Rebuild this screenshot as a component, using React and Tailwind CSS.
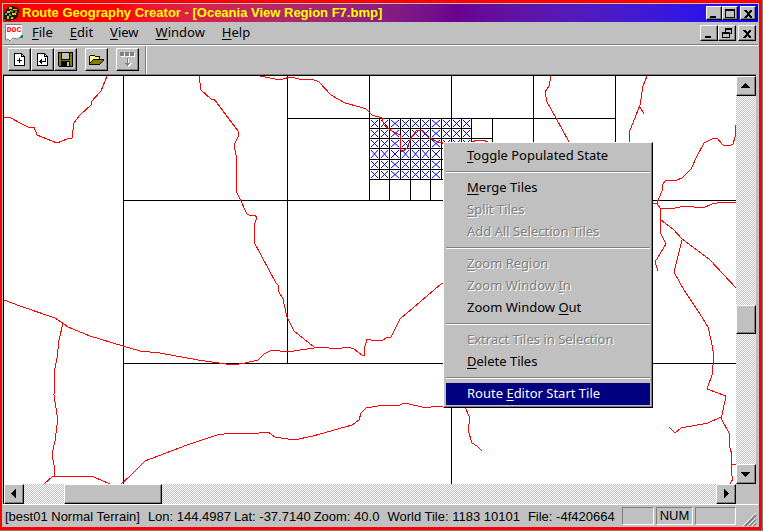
import React from 'react';

const RAISED =
  'bg-[#c0c0c0] border border-t-white border-l-white border-b-black border-r-black shadow-[inset_-1px_-1px_0_#808080]';
const TRACK =
  'bg-[repeating-conic-gradient(#c0c0c0_0_25%,#ffffff_0_50%)] bg-[length:2px_2px]';

const ROADS = [
  '4,118 9,117 22,124 28,127 34,127 37,135 57,143 67,139 72,138 74,123 80,115 92,104 91,102 101,91 107,76',
  '199,76 201,90 211,99 214,99 238,131 238,137 234,145 236,155 236,191 240,199 247,214 251,216 255,215 257,218 254,225 254,242 276,283 278,285 278,290 283,299 287,317 294,331 314,347',
  '4,300 20,306 55,318 64,324 68,327 90,336 123,346 140,351 160,353 198,360 233,365 245,363 258,360 264,354 272,350 287,352 314,348 320,347 337,349 348,347 354,349 362,355 364,355 364,350 367,339 371,340 382,341 386,338 391,337 400,319 441,284 447,281',
  '63,323 59,340 57,358 55,368 54,395 57,415 57,425 55,441 52,454 54,465 54,477',
  '44,484 52,477 68,476 94,477 110,484',
  '121,484 130,476 145,461 187,445 205,439 217,435 231,433 250,434 268,432 275,437 294,440 313,436 352,425 359,420 361,413 366,408 378,406 400,405 404,403 418,406 426,408 437,406 465,407 470,418 468,430 472,443 477,446 482,451',
  '260,76 275,79 283,79 290,77 304,80 312,79 319,82 331,95 345,103 360,107 366,109 372,115 382,118 384,125 392,131 400,135 400,148 402,152 407,148 411,138 416,131 421,130 429,138 438,142 447,144',
  '472,142 477,140 483,140 488,142',
  '551,76 549,86 545,92 547,102 556,118 569,142',
  '647,76 643,86 640,105 629,133 629,142',
  '640,107 644,114',
  '736,125 735,137 733,144 729,146 723,145 717,138 714,138 704,143 697,156 691,169 682,178 677,180 665,181 663,184 662,191 657,203 660,208 660,218 661,220 673,229 682,239 697,250 710,260 736,288',
  '650,203 657,203',
  '661,209 675,208 685,206 703,208 712,204 722,202 736,203',
  '660,219 660,232 666,244 655,262 658,271',
  '682,240 674,272 684,290 700,314 708,327 711,340 714,356 712,375 707,389 726,396 722,415 721,418 729,433 730,448 732,455 731,472 733,479 730,484',
  '721,417 708,423 681,428 675,433 669,427',
  '731,464 736,465',
];

const GRID =
  'M123.5 76V2000M123 200.5H3000M123 363.5H3000M287.5 76V363M369.5 76V200M451.5 76V2000M533.5 76V200M615.5 76V200M287 118.5H616M492.5 118V200M369 138.5H492M389.5 179V200M410.5 179V200M430.5 179V200';

const XS = [369, 379, 389, 400, 410, 420, 430, 441, 451, 461, 471];
const YS = [118, 128, 138, 148, 159, 169, 179];

function Tiles() {
  const cells = [];
  for (let r = 0; r < 6; r++) {
    for (let c = 0; c < 10; c++) {
      const x = XS[c], y = YS[r], x2 = XS[c + 1], y2 = YS[r + 1];
      cells.push(
        <g key={`${r}-${c}`}>
          <rect x={x + 0.5} y={y + 0.5} width={x2 - x} height={y2 - y} stroke="#000" />
          <path
            d={`M${x + 2} ${y + 2}L${x2 - 1} ${y2 - 1}M${x2 - 1} ${y + 2}L${x + 2} ${y2 - 1}`}
            stroke="#0000ff"
            shapeRendering="auto"
          />
        </g>
      );
    }
  }
  return <g fill="none">{cells}</g>;
}

function RouteMap() {
  return (
    <svg className="block h-full w-full" role="img" aria-label="Route map" shapeRendering="crispEdges">
      <g transform="translate(-4 -76)">
        <path d={GRID} stroke="#000" fill="none" />
        <Tiles />
        {ROADS.map((p) => (
          <polyline key={p} points={p} stroke="#ff0000" fill="none" />
        ))}
      </g>
    </svg>
  );
}

function Label({ text }) {
  const i = text.indexOf('&');
  if (i < 0) return <span>{text}</span>;
  return (
    <span className="whitespace-pre">
      {text.slice(0, i)}
      <span className="underline underline-offset-2">{text[i + 1]}</span>
      {text.slice(i + 2)}
    </span>
  );
}

const GLYPHS = {
  min: 'M3 9h6v2H3z',
  max: 'M2 2h10v9H2zM3 4v6h8V4z',
  restore: 'M5 1h7v6h-2v4H2V5h3zM6 3v2h4v1h1V3zM3 7v3h6V7z',
  close: 'M3 3h2l2 2 2-2h2v1L8 7l3 3v1H9L7 9l-2 2H3v-1l3-3-3-3z',
};

function WinButton({ kind, label, size }) {
  return (
    <button type="button" aria-label={label} className={`${RAISED} ${size} flex items-center justify-center`}>
      <svg width="14" height="13" viewBox="0 0 14 13" className="shrink-0" shapeRendering="crispEdges">
        <path d={GLYPHS[kind]} fillRule="evenodd" />
      </svg>
    </button>
  );
}

function ScrollButton({ d, label }) {
  return (
    <button type="button" aria-label={label} className={`${RAISED} flex h-5 w-full shrink-0 items-center justify-center`}>
      <svg width="10" height="10" viewBox="0 0 10 10" shapeRendering="crispEdges">
        <path d={d} />
      </svg>
    </button>
  );
}

const MENU = [
  ['&Toggle Populated State'],
  null,
  ['&Merge Tiles'],
  ['&Split Tiles', 'off'],
  ['Add All Selection Tiles', 'off'],
  null,
  ['&Zoom Region', 'off'],
  ['Zoom Window &In', 'off'],
  ['Zoom Window &Out'],
  null,
  ['Extract Tiles in Selection', 'off'],
  ['&Delete Tiles'],
  null,
  ['Route &Editor Start Tile', 'hot'],
];

function ContextMenu() {
  return (
    <div role="menu" className={`${RAISED} absolute left-[439px] top-[66px] w-[210px] p-[2px] font-['Noto_Sans',sans-serif] text-[13px]`}>
      {MENU.map((m, i) =>
        m ? (
          <button
            key={i}
            type="button"
            role="menuitem"
            disabled={m[1] === 'off'}
            className={`flex h-[22px] w-full items-center whitespace-nowrap pl-[21px] ${
              m[1] === 'off'
                ? 'text-[#808080] [text-shadow:1px_1px_0_#fff]'
                : m[1] === 'hot'
                ? 'bg-[#000080] text-white'
                : 'text-black'
            }`}
          >
            <Label text={m[0]} />
          </button>
        ) : (
          <div key={i} role="separator" className="flex h-[10px] items-center">
            <div className="h-[2px] w-full border-b border-t border-b-white border-t-[#808080]" />
          </div>
        )
      )}
    </div>
  );
}

function ToolButton({ label, children, disabled }) {
  return (
    <button type="button" aria-label={label} disabled={disabled} className={`${RAISED} flex h-[23px] w-[23px] items-center justify-center`}>
      <svg width="17" height="17" viewBox="0 0 17 17" shapeRendering="crispEdges">
        {children}
      </svg>
    </button>
  );
}

const PAGE = 'M3.5 2.5h7l3 3v9h-10z';

function Toolbar() {
  return (
    <div role="toolbar" className="flex h-[30px] shrink-0 border-t border-t-white pl-[5px]">
      <div className="flex gap-2 border-r border-r-[#808080] pr-[6px] pt-[2px] shadow-[1px_0_0_#fff]">
        <div className="flex">
          <ToolButton label="New tile">
            <path d={PAGE} fill="#fff" stroke="#000" />
            <path d="M10.5 2v3.5H14M6 9.5h5M8.5 7v5" stroke="#000" fill="none" />
          </ToolButton>
          <ToolButton label="Import">
            <path d={PAGE} fill="#fff" stroke="#000" />
            <path d="M10.5 2v3.5H14M11.5 7v3.5H6" stroke="#000" fill="none" />
            <path d="M5 10.5l3-3v6z" />
          </ToolButton>
          <ToolButton label="Save">
            <path d="M1 1h15v15H2l-1-1z" />
            <path d="M2 2h2v7h9V2h2v13H2z" fill="#808000" />
            <path d="M5 2h7v6H5z" fill="#c0c0c0" />
            <path d="M4 10h9v5H4z" />
            <path d="M10 11h2v4h-2z" fill="#c0c0c0" />
          </ToolButton>
        </div>
        <ToolButton label="Open">
          <path d="M1 14V5h1V4h4l1 1h5v3h4v1l-4 5z" />
          <path d="M2 12V5h4l1 1h4v2H5z" fill="#ffff80" />
          <path d="M2 13l3-4h10l-4 4z" fill="#808000" />
        </ToolButton>
        <ToolButton label="Extract tiles" disabled>
          <path d="M2 2h4v4H2zM7 2h4v4H7zM12 2h4v4h-4zM8 8h2v4h3l-4 4-4-4h3z" fill="#fff" />
          <path d="M1 1h4v4H1zM6 1h4v4H6zM11 1h4v4h-4zM8 7h1v5h2v1h-1v1H9v1H8v-1H7v-1H6v-1h2z" fill="#808080" />
        </ToolButton>
      </div>
    </div>
  );
}

export default function App() {
  return (
    <div className="flex h-screen w-full flex-col overflow-hidden border-b border-r border-[#808080] bg-[#ff0000] pb-[3px] pr-[3px] pt-[3px] pl-[2px] text-black">
      <div className="flex min-h-0 flex-1 flex-col border-l border-r border-t border-[#c0c0c0] bg-[#c0c0c0]">
        <header className="flex h-[18px] shrink-0 items-center bg-linear-to-r from-[#ff0000] from-15% via-[#6c0090] via-60% to-[#0000ff] to-100% pr-[2px]">
          <svg width="19" height="18" viewBox="0 0 19 18" className="shrink-0" shapeRendering="crispEdges">
            <path d="M1 9l3-5 4-2 5 1 3 3-1 6-3 3-5 2H3l-2-3z" fill="#202008" />
            <path d="M6 3h3v2H6zM10 5h4v1h-4zM4 7h3v2H4zM9 9h4v2H9zM4 12h2v3H4zM8 13h2v2H8z" fill="#e0c020" />
            <path d="M7 6h3v2H7zM12 7h2v2h-2z" fill="#808020" />
            <path d="M2 9h2v2H2zM6 10h2v2H6z" fill="#40a0a0" />
          </svg>
          <h1 className="flex-1 truncate font-['Liberation_Sans',Arial,sans-serif] text-[13px] font-bold leading-[18px] text-[#ffff00]">
            Route Geography Creator - [Oceania View Region F7.bmp]
          </h1>
          <div className="flex">
            <WinButton kind="min" label="Minimize" size="h-[14px] w-4" />
            <WinButton kind="max" label="Maximize" size="h-[14px] w-4" />
            <div className="w-[2px]" />
            <WinButton kind="close" label="Close" size="h-[14px] w-4" />
          </div>
        </header>

        <div className="flex h-[23px] shrink-0 items-center border-b border-b-[#808080] pr-[2px]">
          <svg width="20" height="20" viewBox="0 0 20 20" className="ml-px mr-[8px] shrink-0">
            <path d="M2 2h16v11l-4 3-4-1-3 3-3-2-2 1z" fill="#fff" />
            <path d="M1.5 17.5v-16h16M2 17l2-1 2 2 3-3 4 1 4-2" stroke="#808080" fill="none" />
            <path d="M17 12h2v3h-3z" fill="#008080" />
            <text x="10" y="9" textAnchor="middle" fill="#ff0000" fontFamily="Liberation Mono, monospace" fontWeight="700" fontSize="8">DOC</text>
          </svg>
          <nav className="flex flex-1 gap-[17px] font-['Noto_Sans',sans-serif] text-[13px]">
            {['&File', '&Edit', '&View', '&Window', '&Help'].map((t) => (
              <button key={t} type="button"><Label text={t} /></button>
            ))}
          </nav>
          <div className="flex">
            <WinButton kind="min" label="Minimize document" size="h-4 w-[18px]" />
            <WinButton kind="restore" label="Restore document" size="h-4 w-[18px]" />
            <div className="w-[2px]" />
            <WinButton kind="close" label="Close document" size="h-4 w-[18px]" />
          </div>
        </div>

        <Toolbar />

        <main className="mr-[2px] flex min-h-0 flex-1 border-l border-t border-black shadow-[0_-1px_0_#808080]">
          <div className="flex min-w-0 flex-1 flex-col">
            <div className="relative min-h-0 flex-1 overflow-hidden bg-white">
              <RouteMap />
              <ContextMenu />
            </div>
            <div className={`flex h-5 shrink-0 ${TRACK}`}>
              <div className="w-5 shrink-0"><ScrollButton label="Scroll left" d="M7 0v9h-1v-1h-1v-1h-1v-1h-1v-1h-1v-1h1v-1h1v-1h1v-1h1v-1z" /></div>
              <div className="grow-[40]" />
              <div className={`${RAISED} w-[98px]`} />
              <div className="grow-[555]" />
              <div className="w-5 shrink-0"><ScrollButton label="Scroll right" d="M3 0v9h1v-1h1v-1h1v-1h1v-1h1v-1h-1v-1h-1v-1h-1v-1h-1v-1z" /></div>
            </div>
          </div>
          <div className="flex w-5 shrink-0 flex-col">
            <div className={`flex min-h-0 flex-1 flex-col ${TRACK}`}>
              <ScrollButton label="Scroll up" d="M0 7h9v-1h-1v-1h-1v-1h-1v-1h-1v-1h-1v1h-1v1h-1v1h-1v1h-1z" />
              <div className="grow-[209]" />
              <div className={`${RAISED} h-[29px]`} />
              <div className="grow-[130]" />
              <ScrollButton label="Scroll down" d="M0 3h9v1h-1v1h-1v1h-1v1h-1v1h-1v-1h-1v-1h-1v-1h-1v-1h-1z" />
            </div>
            <div className="h-5 shrink-0 bg-[#c0c0c0]" />
          </div>
        </main>

        <footer className="flex h-[23px] shrink-0 items-stretch border-t border-t-white pt-[2px] font-['Liberation_Sans',Arial,sans-serif] text-[13px]">
          <div className="flex min-w-0 flex-1 items-center whitespace-nowrap pl-[2px]">
            <span className="mr-[8px]">[best01 Normal Terrain]</span>
            <span className="mr-[3px]">Lon: 144.4987</span>
            <span className="mr-[3px]">Lat: -37.7140</span>
            <span className="mr-[8px]">Zoom: 40.0</span>
            <span className="mr-[8px]">World Tile: 1183 10101</span>
            <span>File: -4f420664</span>
          </div>
          <div className="mb-[2px] flex gap-[2px]">
            <div className="w-8 border border-b-white border-l-[#808080] border-r-white border-t-[#808080]" />
            <div className="flex w-[37px] items-center justify-center border border-b-white border-l-[#808080] border-r-white border-t-[#808080]">NUM</div>
            <div className="w-[41px] border border-b-white border-l-[#808080] border-r-white border-t-[#808080]" />
          </div>
          <svg width="22" height="20" viewBox="0 0 22 20" className="shrink-0">
            <path d="M9 19L20 8M13 19l7-7M17 19l3-3" stroke="#808080" strokeWidth="2" />
            <path d="M7 19L20 6M12 19l8-8M16 19l4-4" stroke="#fff" />
          </svg>
        </footer>
      </div>
    </div>
  );
}
